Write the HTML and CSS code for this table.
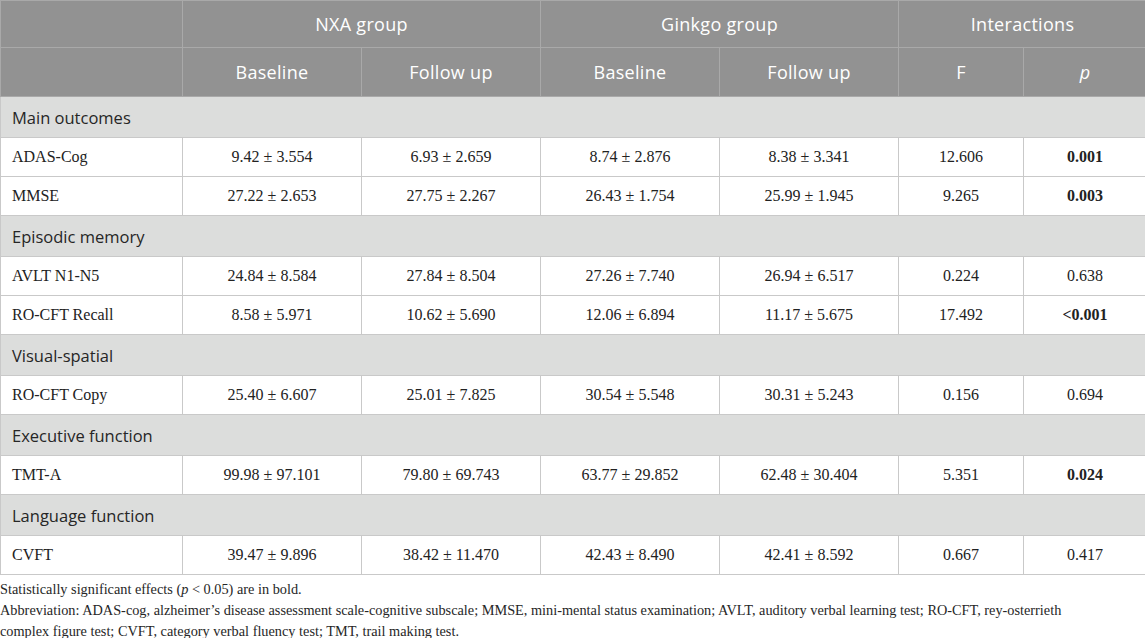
FILE: index.html
```html
<!DOCTYPE html>
<html lang="en">
<head>
    <meta charset="UTF-8">
    <meta name="viewport" content="width=device-width, initial-scale=1.0">
    <title>Outcomes</title>
    <link rel="stylesheet" href="styles.css">
</head>
<body>

    <table class="results">
        <colgroup>
            <col class="c-label">
            <col class="c-val">
            <col class="c-val">
            <col class="c-val">
            <col class="c-val">
            <col class="c-f">
            <col class="c-p">
        </colgroup>
        <thead>
            <tr class="head-top">
                <th></th>
                <th colspan="2">NXA group</th>
                <th colspan="2">Ginkgo group</th>
                <th colspan="2">Interactions</th>
            </tr>
            <tr class="head-sub">
                <th></th>
                <th>Baseline</th>
                <th>Follow up</th>
                <th>Baseline</th>
                <th>Follow up</th>
                <th>F</th>
                <th><i>p</i></th>
            </tr>
        </thead>
        <tbody>
            <tr class="section"><td colspan="7">Main outcomes</td></tr>
            <tr>
                <td>ADAS-Cog</td>
                <td>9.42 ± 3.554</td>
                <td>6.93 ± 2.659</td>
                <td>8.74 ± 2.876</td>
                <td>8.38 ± 3.341</td>
                <td>12.606</td>
                <td><b>0.001</b></td>
            </tr>
            <tr>
                <td>MMSE</td>
                <td>27.22 ± 2.653</td>
                <td>27.75 ± 2.267</td>
                <td>26.43 ± 1.754</td>
                <td>25.99 ± 1.945</td>
                <td>9.265</td>
                <td><b>0.003</b></td>
            </tr>
            <tr class="section"><td colspan="7">Episodic memory</td></tr>
            <tr>
                <td>AVLT N1-N5</td>
                <td>24.84 ± 8.584</td>
                <td>27.84 ± 8.504</td>
                <td>27.26 ± 7.740</td>
                <td>26.94 ± 6.517</td>
                <td>0.224</td>
                <td>0.638</td>
            </tr>
            <tr>
                <td>RO-CFT Recall</td>
                <td>8.58 ± 5.971</td>
                <td>10.62 ± 5.690</td>
                <td>12.06 ± 6.894</td>
                <td>11.17 ± 5.675</td>
                <td>17.492</td>
                <td><b>&lt;0.001</b></td>
            </tr>
            <tr class="section"><td colspan="7">Visual-spatial</td></tr>
            <tr>
                <td>RO-CFT Copy</td>
                <td>25.40 ± 6.607</td>
                <td>25.01 ± 7.825</td>
                <td>30.54 ± 5.548</td>
                <td>30.31 ± 5.243</td>
                <td>0.156</td>
                <td>0.694</td>
            </tr>
            <tr class="section"><td colspan="7">Executive function</td></tr>
            <tr>
                <td>TMT-A</td>
                <td>99.98 ± 97.101</td>
                <td>79.80 ± 69.743</td>
                <td>63.77 ± 29.852</td>
                <td>62.48 ± 30.404</td>
                <td>5.351</td>
                <td><b>0.024</b></td>
            </tr>
            <tr class="section"><td colspan="7">Language function</td></tr>
            <tr>
                <td>CVFT</td>
                <td>39.47 ± 9.896</td>
                <td>38.42 ± 11.470</td>
                <td>42.43 ± 8.490</td>
                <td>42.41 ± 8.592</td>
                <td>0.667</td>
                <td>0.417</td>
            </tr>
        </tbody>
    </table>

    <div class="notes">
        <p>Statistically significant effects (<i>p</i> &lt; 0.05) are in bold.</p>
        <p>Abbreviation: ADAS-cog, alzheimer’s disease assessment scale-cognitive subscale; MMSE, mini-mental status examination; AVLT, auditory verbal learning test; RO-CFT, rey&#8209;osterrieth complex figure test; CVFT, category verbal fluency test; TMT, trail making test.</p>
    </div>

</body>
</html>
```

FILE: styles.css
```css
body {
    margin: 0;
    background: #ffffff;
    color: #222222;
    font-family: "Liberation Serif", "Times New Roman", serif;
}

.results {
    width: 1145px;
    border-collapse: collapse;
    table-layout: fixed;
}

.c-label { width: 182px; }
.c-val { width: 179px; }
.c-f { width: 125px; }
.c-p { width: 123px; }

.results th {
    background: #929292;
    color: #ffffff;
    font-family: "Open Sans", "Noto Sans", sans-serif;
    font-weight: 400;
    font-size: 18px;
    letter-spacing: 0.3px;
    border: 1px solid #a9a9a9;
    padding: 0;
}

.head-top th { height: 46px; }
.head-sub th { height: 48px; }

.head-sub th i {
    font-family: "Open Sans", "Noto Sans", sans-serif;
}

.results td {
    border: 1px solid #c9c9c9;
    height: 38px;
    padding: 0;
    text-align: center;
    font-size: 16px;
}

.results td:first-child {
    text-align: left;
    padding-left: 11px;
}

.results tr.section td {
    background: #dcdddc;
    height: 40px;
    font-family: "Open Sans", "Noto Sans", sans-serif;
    font-size: 16.5px;
    color: #262626;
}

.notes {
    padding: 4px 60px 0 0;
    font-size: 14.3px;
    line-height: 21px;
    color: #262626;
}

.notes p {
    margin: 0;
}
```
